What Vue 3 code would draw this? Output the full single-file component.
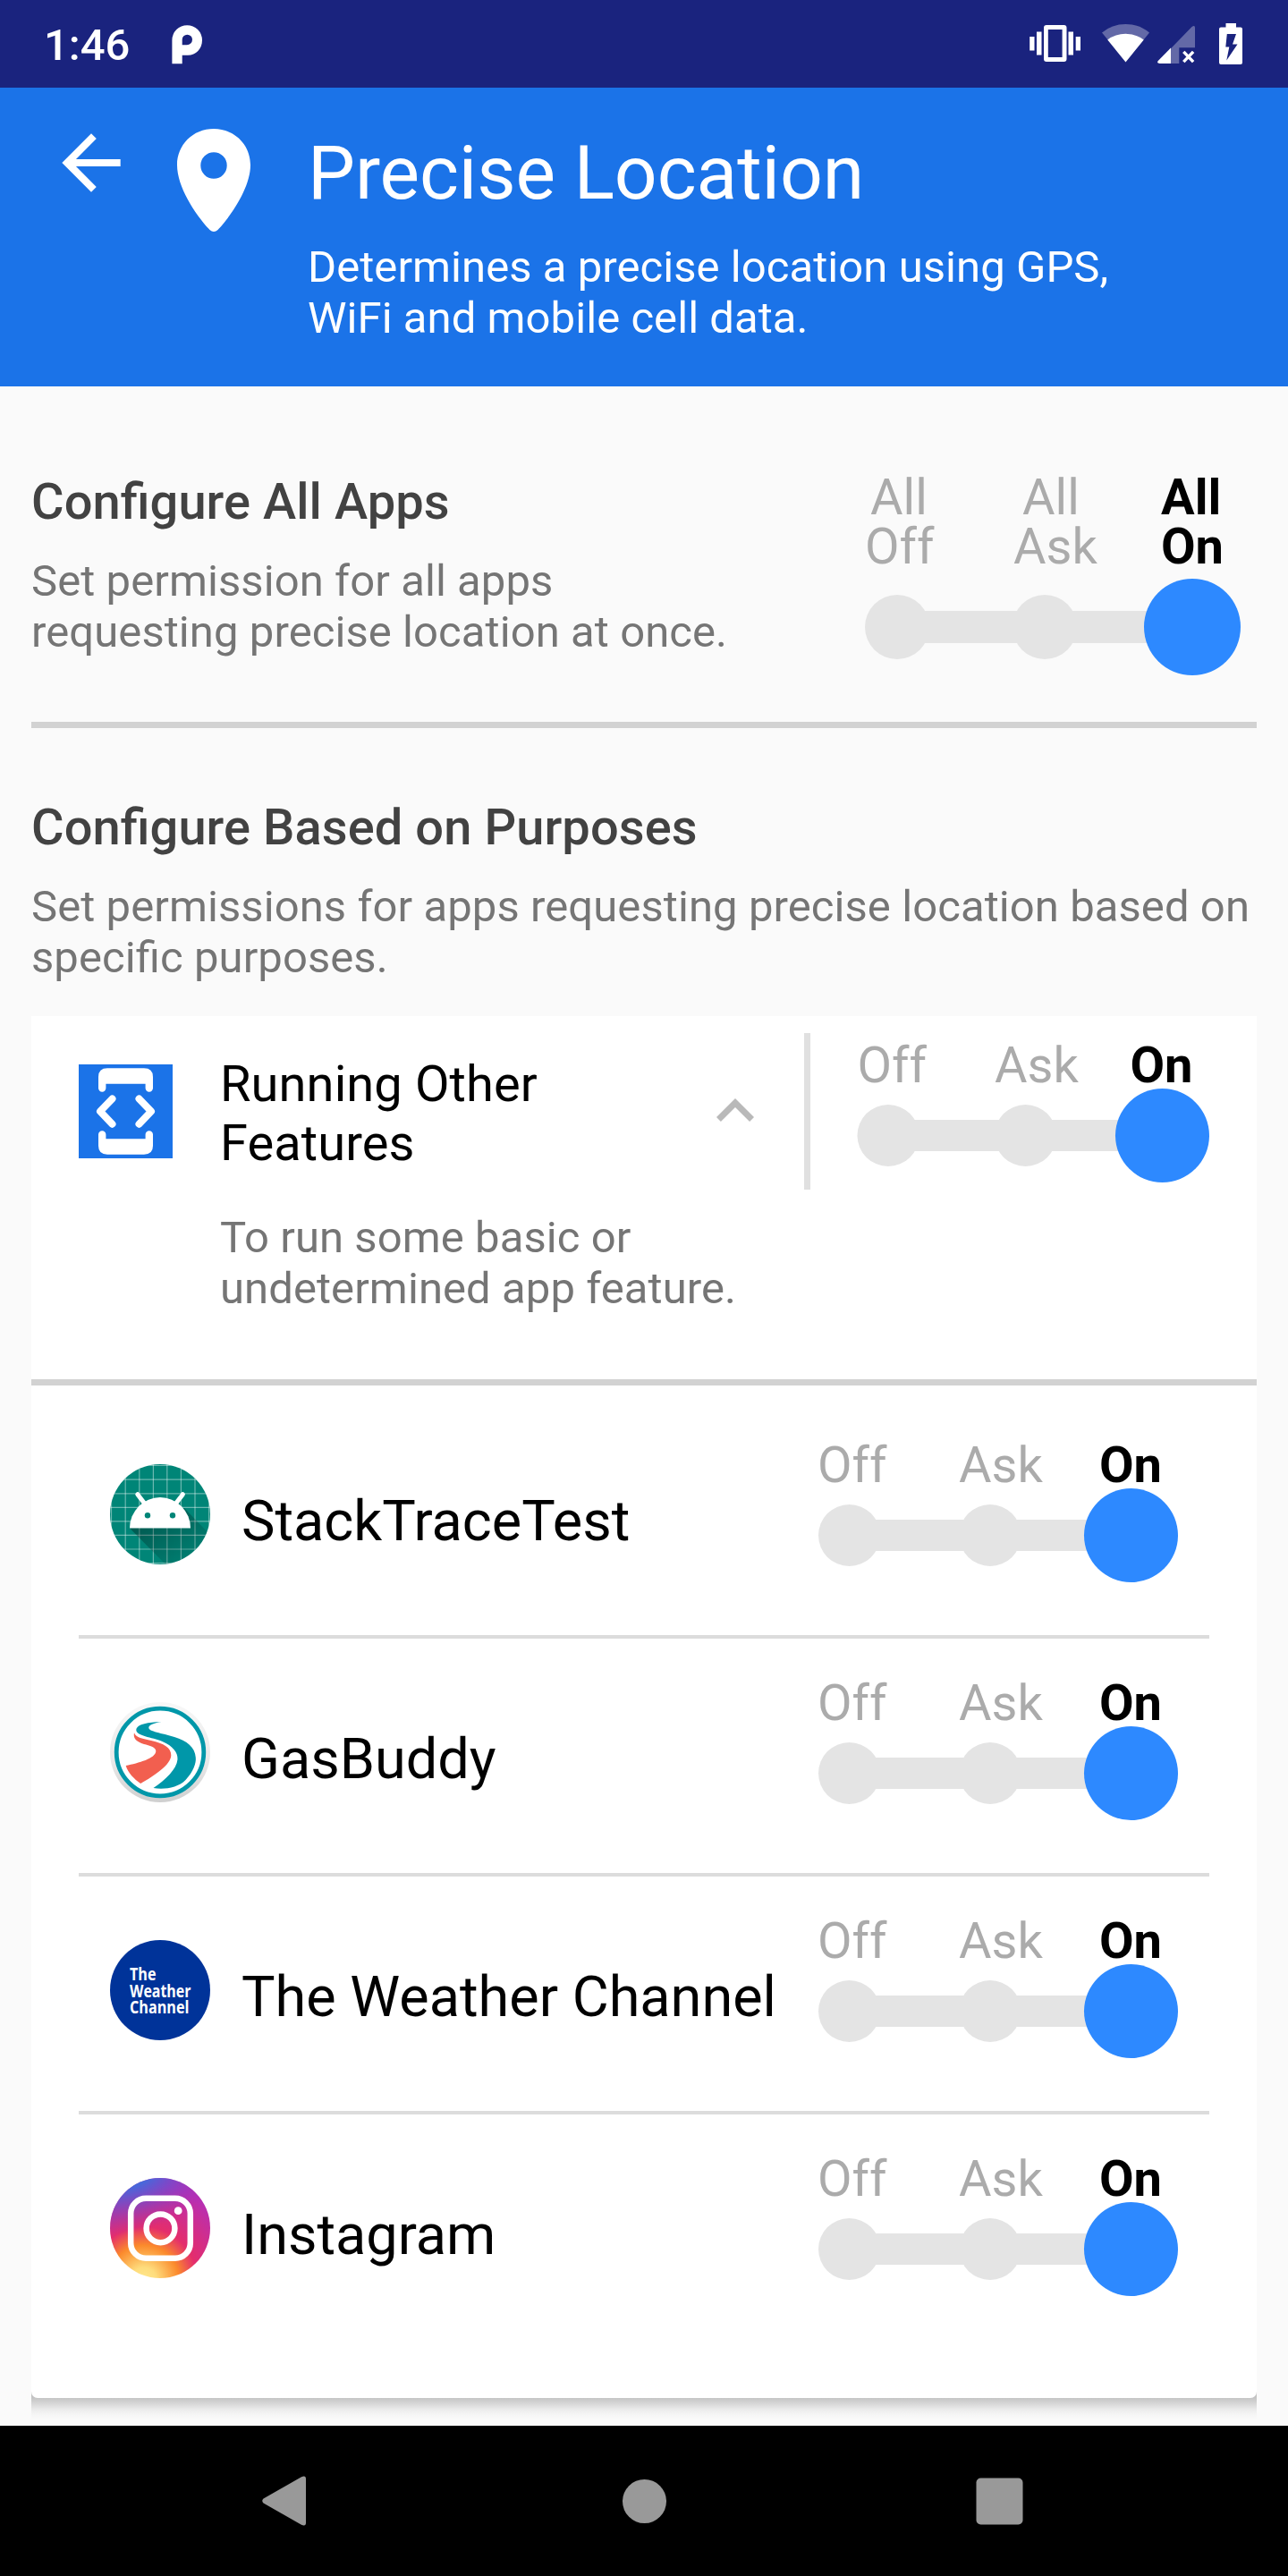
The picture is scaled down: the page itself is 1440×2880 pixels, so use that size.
<script setup>
const levels = ['Off', 'Ask', 'On']

const apps = [
  { id: 'stack', name: 'StackTraceTest' },
  { id: 'gas', name: 'GasBuddy' },
  { id: 'weather', name: 'The Weather Channel' },
  { id: 'insta', name: 'Instagram' },
]

const gridLines = [1.5, 17.2, 32.8, 48.4, 63.8, 79.4, 95, 110.6]
</script>

<template>
  <div class="screen">
    <div class="status">
      <span class="clock">1:46</span>
      <svg class="parking" width="34" height="44" viewBox="192 28 34 44">
        <path fill="#fff" fill-rule="evenodd" d="M192.4 71.3V45a16.8 16.8 0 0 1 33.6 0C226 54.500 219 61.800 210 61.800H203.700V71.300zM203.700 50.300H209a6 6 0 0 0 6-6a5.600 5.600 0 0 0-11.300 0z" />
      </svg>
      <svg class="sys" width="240" height="50" viewBox="1150 25 240 50">
        <g fill="#fff">
          <path fill-rule="evenodd" d="M1170 28h19.500q3 0 3 3v35q0 3-3 3h-19.500q-3 0-3-3v-35q0-3 3-3zm1.800 5v31h15.800v-31z" />
          <path d="M1159 35.500h5.500v26h-5.500zM1151.200 41h5.300v15.500h-5.300zM1194.500 35.500h5.500v26h-5.500zM1202.700 41h5.300v15.500h-5.300z" />
          <path opacity=".32" d="M1258.500 69L1232 36.500Q1243 27 1258.500 27T1285 36.500z" />
          <path d="M1258.500 69.500L1238.300 44.500Q1247 37.800 1258.500 37.800T1278.700 44.500z" />
          <path opacity=".32" d="M1309 54.200L1332.500 30Q1336 27.500 1336 31V53.300H1318.300V71H1309z" />
          <path d="M1309 53.500V71H1296.500Q1292.500 70.500 1295 67.800z" />
          <path fill="none" stroke="#fff" stroke-width="3.400" d="M1323.300 57.800l10.800 11.400m0-11.400l-10.800 11.400" />
          <path fill-rule="evenodd" d="M1370.500 26h11.500v4.500h5q2 0 2 2v37.500q0 2-2 2h-22q-2 0-2-2v-37.500q0-2 2-2h5.500zM1371.800 38l-1.500 14.500h4l-3 15 12.200-18h-5.500l4-11.500z" />
        </g>
      </svg>
    </div>

    <header class="header">
      <svg class="back" width="98" height="98" viewBox="0 0 24 24">
        <path fill="#fff" d="M20 11H7.830l5.590-5.590L12 4l-8 8 8 8 1.410-1.410L7.830 13H20v-2z" />
      </svg>
      <svg class="pin" width="84" height="118" viewBox="0 0 84 118">
        <path fill="#fff" fill-rule="evenodd" d="M42 1C18.500 1 1 19 1 41.500C1 66 21.500 97 37.500 114Q42 118 46.500 114C62.500 97 83 66 83 41.500C83 19 65.500 1 42 1zM42 27.300a14.700 14.700 0 1 1 0 29.400a14.700 14.700 0 0 1 0-29.400z" />
      </svg>
      <div class="head-text">
        <h1>Precise Location</h1>
        <p>Determines a precise location using GPS,<br />WiFi and mobile cell data.</p>
      </div>
    </header>

    <main>
      <section class="all-apps">
        <div>
          <h2>Configure All Apps</h2>
          <p class="desc">Set permission for all apps<br />requesting precise location at once.</p>
        </div>
        <div class="slider large">
          <div class="labels">
            <span v-for="l in levels" :key="l" :class="l.toLowerCase()"><span class="all">All</span><br />{{ l }}</span>
          </div>
          <svg width="420" height="110" viewBox="0 0 420 110">
            <g fill="#e4e4e4">
              <rect x="36" y="37" width="330" height="36" />
              <circle cx="36" cy="55" r="36" />
              <circle cx="201" cy="55" r="36" />
            </g>
            <circle cx="366" cy="55" r="54" fill="#2d89ff" />
          </svg>
        </div>
      </section>

      <hr class="rule" />

      <section class="purposes">
        <h2>Configure Based on Purposes</h2>
        <p class="desc">Set permissions for apps requesting precise location based on<br />specific purposes.</p>
      </section>

      <div class="card">
        <div class="purpose">
          <svg class="purpose-icon" width="105" height="105" viewBox="0 0 105 105">
            <rect width="105" height="105" fill="#1b73e8" />
            <g fill="#fff">
              <path d="M22 26.500V14Q22 4.300 32 4.300H73Q83 4.300 83 14V26.500a4.200 4.200 0 0 1-8.400 0V21.700H30.400V26.500a4.200 4.200 0 0 1-8.400 0z" />
              <path d="M22 78.500V91Q22 100.700 32 100.700H73Q83 100.700 83 91V78.500a4.200 4.200 0 0 0-8.400 0V83.300H30.400V78.500a4.200 4.200 0 0 0-8.400 0z" />
            </g>
            <path fill="none" stroke="#fff" stroke-width="8" stroke-linecap="round" stroke-linejoin="round" d="M37.500 38.500L24 52.600l13.500 14.100M67.500 38.500L81 52.600 67.500 66.700" />
          </svg>
          <div class="purpose-text">
            <h3>Running Other<br />Features</h3>
            <p class="desc">To run some basic or<br />undetermined app feature.</p>
          </div>
          <svg class="chevron" width="84" height="84" viewBox="0 0 24 24">
            <path fill="#b9b9b9" d="M12 8l-6 6 1.410 1.410L12 10.830l4.590 4.580L18 14z" />
          </svg>
          <div class="bar"></div>
          <div class="slider mid">
            <div class="labels">
              <span v-for="l in levels" :key="l" :class="l.toLowerCase()">{{ l }}</span>
            </div>
            <svg width="394" height="107" viewBox="0 0 394 107">
              <g fill="#e4e4e4">
                <rect x="35" y="36" width="306" height="35" />
                <circle cx="35" cy="53.500" r="34.500" />
                <circle cx="188.500" cy="53.500" r="34.500" />
              </g>
              <circle cx="341.500" cy="53.500" r="52.500" fill="#2d89ff" />
            </svg>
          </div>
        </div>

        <hr class="card-rule" />

        <ul class="apps">
          <li v-for="app in apps" :key="app.id" class="app">
            <svg v-if="app.id === 'stack'" class="icon" viewBox="0 0 112 112">
              <defs>
                <clipPath id="disc"><circle cx="56" cy="56" r="56" /></clipPath>
                <linearGradient id="cast" gradientUnits="userSpaceOnUse" x1="50" y1="55" x2="88" y2="108">
                  <stop offset="0" stop-opacity=".32" />
                  <stop offset="1" stop-opacity="0.050" />
                </linearGradient>
              </defs>
              <g clip-path="url(#disc)">
                <rect width="112" height="112" fill="#008577" />
                <g stroke="#fff" stroke-opacity=".42" stroke-width="1.200">
                  <line v-for="g in gridLines" :key="'v' + g" :x1="g" :x2="g" y1="0" y2="112" />
                  <line v-for="g in gridLines" :key="'h' + g" :y1="g" :y2="g" x1="0" x2="112" />
                </g>
                <path fill="url(#cast)" d="M22 71.500L64 114H112V79L83 49z" />
              </g>
              <path fill="#fff" d="M22 71.600a34 34.600 0 0 1 68 0z" />
              <path fill="none" stroke="#fff" stroke-width="5" stroke-linecap="round" d="M30.800 33.700l8.500 11M81.400 33.700l-8.500 11" />
              <circle cx="42" cy="57.300" r="3.200" fill="#008577" />
              <circle cx="70" cy="57.300" r="3.200" fill="#008577" />
            </svg>

            <svg v-else-if="app.id === 'gas'" class="icon" viewBox="0 0 112 112">
              <defs>
                <linearGradient id="halo" x1="0" y1="0" x2="0" y2="1">
                  <stop offset="0" stop-color="#f8f8f8" />
                  <stop offset=".6" stop-color="#e8e8e8" />
                  <stop offset="1" stop-color="#cfcfcf" />
                </linearGradient>
              </defs>
              <circle cx="56" cy="56" r="56" fill="url(#halo)" />
              <circle cx="56" cy="56" r="48.800" fill="#fff" stroke="#0097a9" stroke-width="4.800" />
              <path fill="#0097a9" d="M57.900 22.300C46 22 30 24 29.300 31C29 38 47 39 58.500 44C70 49 76 56 75.500 64C74.500 75 62 87 48.500 96C60 98 76 96 84.500 87C93 78 96.500 68 95.800 62C95 50 86 43.500 72 39C58 34.500 43 33 43.300 28.500C43.600 25.500 50 23 57.900 22.300z" />
              <path fill="#f25f4f" d="M27 34.300C29 40 37 41 46 43C60 46 68.500 51 68.300 59.500C68 70 50 82 34.200 91C27 86 20 79 17.700 71C32 68 51 63 51.300 54.700C51.500 50.500 44 48.500 38 47C30 44.500 25.500 41 27 34.300z" />
            </svg>

            <svg v-else-if="app.id === 'weather'" class="icon" viewBox="0 0 112 112">
              <circle cx="56" cy="56" r="56" fill="#039" />
              <g class="twc" fill="#fff">
                <text x="22" y="45.300" textLength="29.500" lengthAdjust="spacingAndGlyphs">The</text>
                <text x="22" y="63.600" textLength="68.500" lengthAdjust="spacingAndGlyphs">Weather</text>
                <text x="22" y="81.700" textLength="66.500" lengthAdjust="spacingAndGlyphs">Channel</text>
              </g>
            </svg>

            <svg v-else class="icon" viewBox="0 0 112 112">
              <defs>
                <radialGradient id="warm" gradientUnits="userSpaceOnUse" cx="38" cy="114" r="108">
                  <stop offset="0" stop-color="#ffe98f" />
                  <stop offset=".13" stop-color="#fedc7c" />
                  <stop offset=".36" stop-color="#fb8a2c" />
                  <stop offset=".55" stop-color="#e42d6c" />
                  <stop offset="1" stop-color="#b82fb2" />
                </radialGradient>
                <radialGradient id="cool" gradientUnits="userSpaceOnUse" cx="0" cy="0" r="1" gradientTransform="translate(24 -6) rotate(70) scale(66 110)">
                  <stop offset="0" stop-color="#2f7ee8" />
                  <stop offset=".2" stop-color="#3f6ddd" />
                  <stop offset="1" stop-color="#8a30c8" stop-opacity="0" />
                </radialGradient>
              </defs>
              <circle cx="56" cy="56" r="56" fill="url(#warm)" />
              <circle cx="56" cy="56" r="56" fill="url(#cool)" />
              <g fill="none" stroke="#fff" stroke-width="6.500">
                <rect x="23.200" y="22.700" width="66.600" height="67" rx="17" />
                <circle cx="56.500" cy="56.300" r="15.900" />
              </g>
              <circle cx="76.200" cy="36.700" r="4.400" fill="#fff" />
            </svg>

            <span class="name">{{ app.name }}</span>
            <div class="slider small">
              <div class="labels">
                <span v-for="l in levels" :key="l" :class="l.toLowerCase()">{{ l }}</span>
              </div>
              <svg width="404" height="107" viewBox="0 0 404 107">
                <g fill="#e4e4e4">
                  <rect x="35.500" y="36" width="315" height="35" />
                  <circle cx="35.500" cy="53.500" r="34.500" />
                  <circle cx="193" cy="53.500" r="34.500" />
                </g>
                <circle cx="350.500" cy="53.500" r="52.500" fill="#2d89ff" />
              </svg>
            </div>
          </li>
        </ul>
      </div>
      <div class="shade"></div>
    </main>

    <nav class="nav">
      <svg width="50" height="56" viewBox="0 0 50 56">
        <path fill="#999" d="M1.500 25.500L44 1.200Q49 -1 49 3.500V52.500Q49 57 44 54.800L1.500 30.500Q-1 28 1.500 25.500z" />
      </svg>
      <svg class="home" width="49" height="49" viewBox="0 0 49 49"><circle cx="24.500" cy="24.500" r="24.500" fill="#999" /></svg>
      <svg width="53" height="53" viewBox="0 0 53 53"><rect x=".5" y=".5" width="52" height="52" rx="5" fill="#999" /></svg>
    </nav>
  </div>
</template>

<style>
html,
body {
  margin: 0;
  background: #fafafa;
}
</style>

<style scoped>
.screen {
  width: 1440px;
  height: 2880px;
  display: flex;
  flex-direction: column;
  overflow: hidden;
  background: #fafafa;
  font-family: Roboto, sans-serif;
  color: #000;
}
svg {
  display: block;
  flex: none;
}
h1,
h2,
h3,
p,
ul {
  margin: 0;
  padding: 0;
  white-space: nowrap;
}
hr {
  border: 0;
  margin: 0;
}

.status {
  height: 98px;
  flex: none;
  display: flex;
  align-items: center;
  box-sizing: border-box;
  padding: 2px 50px 0 49px;
  background: #1a237e;
}
.clock {
  width: 143px;
  font-size: 49px;
  font-weight: 500;
  line-height: 57px;
  color: #fff;
}
.sys {
  margin-left: auto;
}

.header {
  height: 334px;
  flex: none;
  display: flex;
  align-items: flex-start;
  background: #1b73e8;
  color: #fff;
}
.back {
  margin: 35px 0 0 53px;
}
.pin {
  margin: 45px 0 0 46px;
}
.head-text {
  margin: 47px 0 0 63px;
}
h1 {
  font-size: 84px;
  font-weight: 400;
  line-height: 98px;
  letter-spacing: -0.08px;
}
.head-text p {
  margin-top: 27px;
  font-size: 49px;
  line-height: 57px;
  letter-spacing: 0.06px;
}

main {
  height: 2280px;
  flex: none;
  box-sizing: border-box;
  padding: 96px 35px 0;
  overflow: hidden;
}
h2 {
  font-size: 56px;
  font-weight: 500;
  line-height: 66px;
  letter-spacing: 0.08px;
  font-feature-settings: "liga" 1;
  color: #424242;
}
.desc {
  font-size: 49px;
  line-height: 57px;
  letter-spacing: 0.08px;
  font-feature-settings: "liga" 1;
  color: #757575;
}
h2 + .desc {
  margin-top: 27px;
}
.all-apps {
  height: 279px;
  display: flex;
  justify-content: space-between;
}
.rule {
  height: 7px;
  background: #d2d2d2;
}
.purposes {
  height: 244px;
  padding-top: 78px;
}

.labels {
  display: grid;
  justify-items: start;
  font-size: 56px;
  line-height: 66px;
  color: #ababab;
  white-space: nowrap;
}
.labels .on {
  color: #000;
  font-weight: 700;
}
.large {
  width: 438px;
}
.large .labels {
  grid-template-columns: 166px 165px 107px;
  line-height: 55px;
  padding-top: 1px;
}
.off .all {
  margin-left: 6px;
}
.ask .all {
  margin-left: 10px;
}
.large svg {
  margin-top: 7px;
}
.mid .labels {
  grid-template-columns: 153.5px 151.5px 89px;
  padding-left: 0.5px;
}
.small .labels {
  grid-template-columns: 158px 157px 89px;
}
.mid svg,
.small svg {
  margin-top: -8px;
}

.card {
  position: relative;
  z-index: 1;
  height: 1545px;
  background: #fff;
  border-radius: 0 0 7px 7px;
}
.purpose {
  height: 406px;
  display: flex;
  align-items: flex-start;
}
.purpose-icon {
  margin: 54px 0 0 53px;
}
.purpose-text {
  width: 534px;
  margin: 43px 0 0 53px;
}
h3 {
  font-size: 56px;
  font-weight: 400;
  line-height: 66px;
  letter-spacing: 0.1px;
}
h3 + .desc {
  margin-top: 44px;
}
.chevron {
  margin-top: 64px;
}
.bar {
  width: 7px;
  height: 175px;
  margin: 19px 0 0 35px;
  background: #e0e0e0;
}
.mid {
  margin: 22px 0 0 52px;
}
.card-rule {
  height: 7px;
  background: #d2d2d2;
}
.apps {
  list-style: none;
  padding: 17px 53px 0;
}
.app {
  height: 262px;
  display: flex;
  align-items: flex-start;
}
.app + .app {
  border-top: 4px solid #dcdcdc;
}
.icon {
  width: 112px;
  height: 112px;
  margin: 71px 35px 0;
}
.twc {
  font-family: "Open Sans", "Noto Sans", sans-serif;
  font-size: 19px;
  font-weight: 700;
}
.name {
  width: 644px;
  margin-top: 98px;
  font-size: 63px;
  line-height: 74px;
  white-space: nowrap;
}
.small {
  margin-top: 39px;
}
.shade {
  height: 31px;
  margin-top: -7px;
  background: linear-gradient(#bdbdbd 0, #c5c5c5 7px, #d6d6d6 13px, #ececec 20px, #f6f6f6 26px, #fafafa 31px);
}

.nav {
  height: 168px;
  flex: none;
  display: flex;
  align-items: center;
  box-sizing: border-box;
  justify-content: space-between;
  padding: 0 296px 0 293px;
  background: #000;
}
.home {
  margin-left: 6px;
}
</style>
